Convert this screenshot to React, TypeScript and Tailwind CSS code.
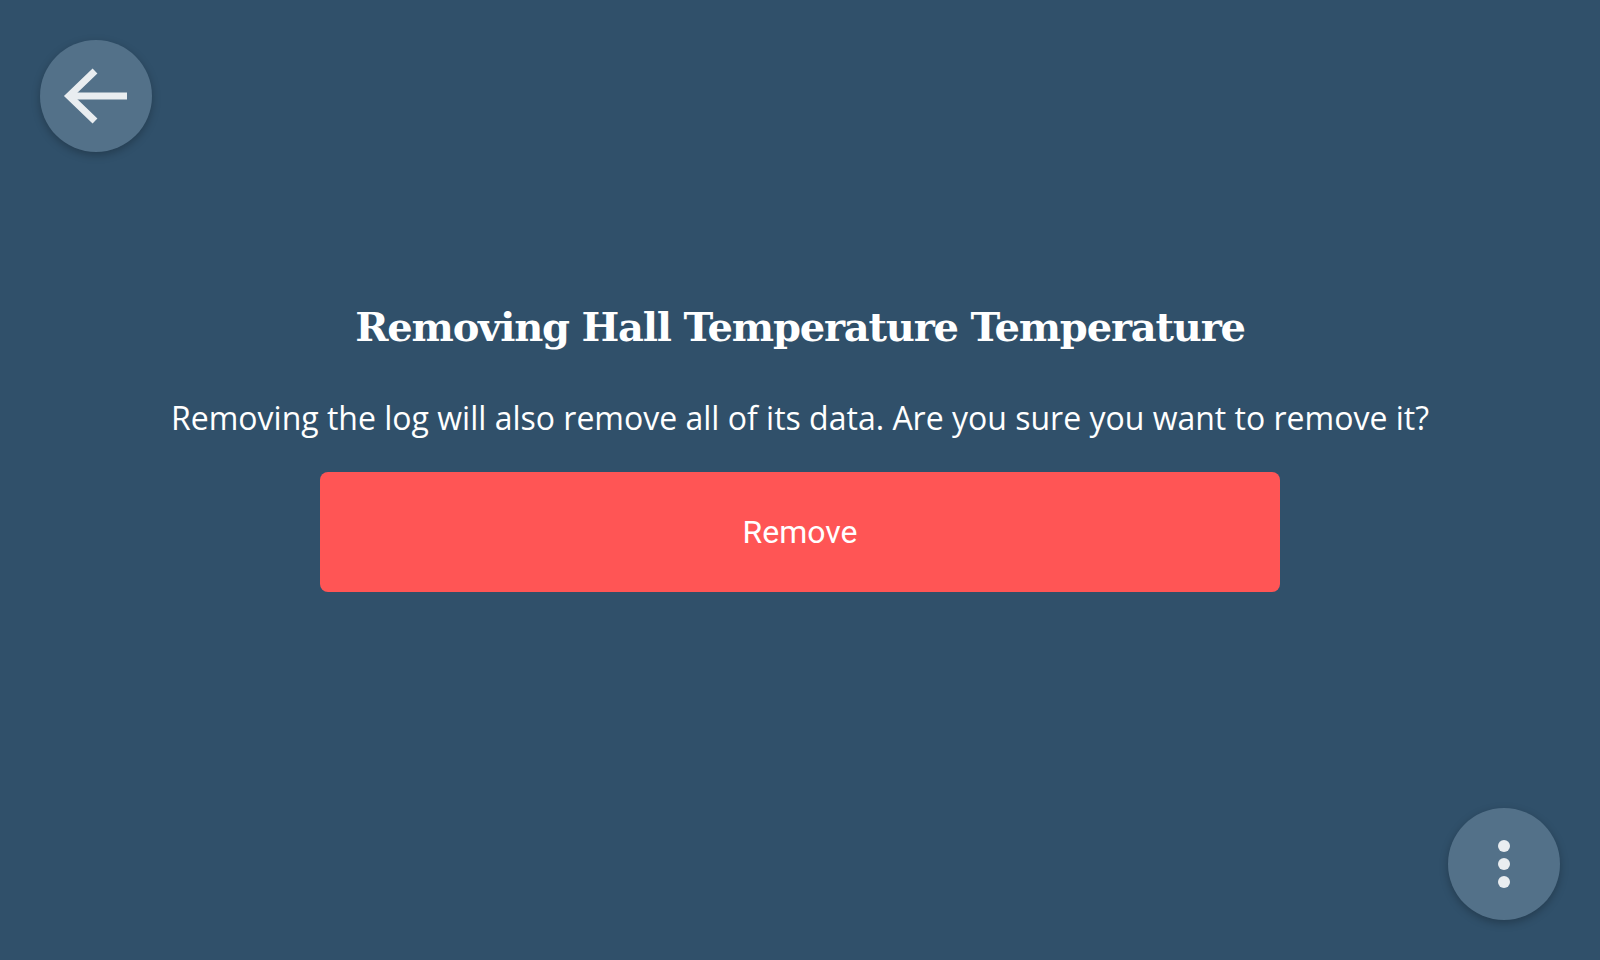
import React from "react";

export default function App() {
  return (
    <div className="relative w-[1600px] h-[960px] overflow-hidden bg-[#30506a]">
      <button className="absolute left-[40px] top-[40px] w-[112px] h-[112px] rounded-full bg-[#537189] shadow-[0_3px_8px_rgba(0,0,0,0.25)] flex items-center justify-center">
        <svg width="112" height="112" viewBox="0 0 112 112" fill="none">
          <path d="M55 31 L29 56 L55 81" stroke="#e9edf0" strokeWidth="7" strokeLinejoin="miter" strokeLinecap="butt" />
          <path d="M29 56 H87" stroke="#e9edf0" strokeWidth="7" strokeLinecap="butt" />
        </svg>
      </button>

      <div className="flex flex-col items-center pt-[302px]">
        <h1 className="text-white font-bold text-[40px] leading-[50px] font-['DejaVu_Serif',serif] tracking-[-1.2px]">
          Removing Hall Temperature Temperature
        </h1>
        <p className="mt-[44px] text-white text-[32px] leading-[44px] font-['Open_Sans',sans-serif]">
          Removing the log will also remove all of its data. Are you sure you want to remove it?
        </p>
        <button className="mt-[32px] w-[960px] h-[120px] rounded-lg bg-[#ff5555] text-white text-[32px] font-['Roboto',sans-serif]">
          Remove
        </button>
      </div>

      <button className="absolute right-[40px] bottom-[40px] w-[112px] h-[112px] rounded-full bg-[#537189] shadow-[0_3px_8px_rgba(0,0,0,0.25)] flex flex-col items-center justify-center gap-[6px]">
        <span className="block w-[12px] h-[12px] rounded-full bg-[#e9edf0]" />
        <span className="block w-[12px] h-[12px] rounded-full bg-[#e9edf0]" />
        <span className="block w-[12px] h-[12px] rounded-full bg-[#e9edf0]" />
      </button>
    </div>
  );
}
